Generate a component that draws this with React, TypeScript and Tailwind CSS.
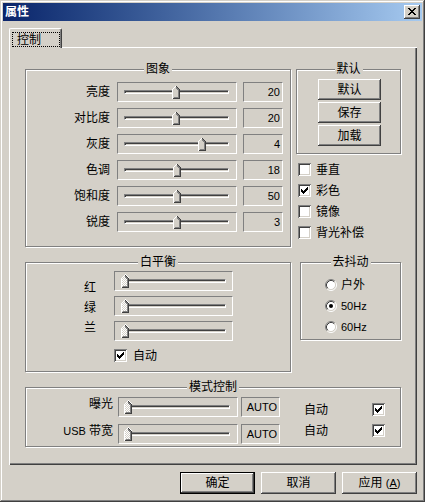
import React from "react";

const FONT = "font-['Liberation_Sans','Noto_Sans_CJK_SC',sans-serif]";

function Thumb({ left, dither }: { left: number; dither?: boolean }) {
  return (
    <svg
      className="absolute top-[2px]"
      style={{ left }}
      width="8"
      height="14"
      viewBox="0 0 8 14"
      shapeRendering="crispEdges"
    >
      <path d="M0 4 L4 0 L8 4 L8 14 L0 14 Z" fill={dither ? "url(#dith)" : "#d4d0c8"} />
      <path d="M0.5 13.5 V4.5 L4 1" stroke="#ffffff" fill="none" />
      <path d="M4 1 L7.5 4.5 V13.5 H0.5" stroke="#404040" fill="none" />
      <path d="M4 2.4 L6.5 4.9 V12.5 H1.5" stroke="#808080" fill="none" />
    </svg>
  );
}

function Slider({ w, thumb, dither }: { w: string; thumb: number; dither?: boolean }) {
  return (
    <div
      className={`relative h-[20px] shrink-0 border border-t-[#808080] border-l-[#808080] border-b-white border-r-white ${w}`}
    >
      <div className="ml-[6px] mt-[7px] w-[105px] h-[4px] bg-[#d4d0c8] border border-t-[#808080] border-l-[#808080] border-b-white border-r-white shadow-[inset_1px_1px_#404040]" />
      <Thumb left={thumb} dither={dither} />
    </div>
  );
}

function ValueBox({ w, children }: { w: string; children: React.ReactNode }) {
  return (
    <div
      className={`h-[20px] shrink-0 border border-t-[#808080] border-l-[#808080] border-b-white border-r-white flex items-center justify-end pr-[2px] pb-[1px] text-[11px] ${w}`}
    >
      {children}
    </div>
  );
}

const CHECK_COLS = [2, 3, 4, 3, 2, 1, 0];

function CheckBox({ checked }: { checked?: boolean }) {
  return (
    <div className="relative w-[13px] h-[13px] shrink-0 bg-white shadow-[inset_1px_1px_#808080,inset_-1px_-1px_#ffffff,inset_2px_2px_#404040,inset_-2px_-2px_#d4d0c8]">
      {checked && (
        <svg className="absolute left-[3px] top-[3px]" width="7" height="7" shapeRendering="crispEdges">
          {CHECK_COLS.map((y, x) => (
            <rect key={x} x={x} y={y} width="1" height="3" fill="#000" />
          ))}
        </svg>
      )}
    </div>
  );
}

function Radio({ checked }: { checked?: boolean }) {
  return (
    <svg width="12" height="12" viewBox="0 0 12 12" className="shrink-0">
      <circle cx="6" cy="6" r="4.6" fill="#fff" />
      <path d="M2.11 9.89 A5.5 5.5 0 0 1 9.89 2.11" stroke="#808080" fill="none" />
      <path d="M9.89 2.11 A5.5 5.5 0 0 1 2.11 9.89" stroke="#ffffff" fill="none" />
      <path d="M2.82 9.18 A4.5 4.5 0 0 1 9.18 2.82" stroke="#404040" fill="none" />
      <path d="M9.18 2.82 A4.5 4.5 0 0 1 2.82 9.18" stroke="#d4d0c8" fill="none" />
      {checked && <circle cx="6" cy="6" r="2" fill="#000" />}
    </svg>
  );
}

function Btn({
  className,
  def,
  children,
}: {
  className: string;
  def?: boolean;
  children: React.ReactNode;
}) {
  return (
    <div className={`shrink-0 bg-[#d4d0c8] ${def ? "border border-black" : ""} ${className}`}>
      <div className="w-full h-full flex items-center justify-center shadow-[inset_-1px_-1px_#404040,inset_1px_1px_#ffffff,inset_-2px_-2px_#808080,inset_2px_2px_#d4d0c8]">
        {children}
      </div>
    </div>
  );
}

function Group({
  title,
  className,
  children,
}: {
  title: string;
  className: string;
  children?: React.ReactNode;
}) {
  return (
    <div
      className={`relative shrink-0 border border-[#808080] shadow-[inset_1px_1px_#ffffff,1px_1px_#ffffff] ${className}`}
    >
      <span className="absolute left-1/2 -translate-x-1/2 -top-[8px] px-[2px] bg-[#d4d0c8] whitespace-nowrap leading-[14px]">
        {title}
      </span>
      {children}
    </div>
  );
}

const X_ROWS: number[][] = [
  [0, 1, 6, 7],
  [1, 2, 5, 6],
  [2, 3, 4, 5],
  [3, 4],
  [2, 3, 4, 5],
  [1, 2, 5, 6],
  [0, 1, 6, 7],
];

const IMAGE_ROWS = [
  { l: "亮度", v: "20", t: 54 },
  { l: "对比度", v: "20", t: 54 },
  { l: "灰度", v: "4", t: 80 },
  { l: "色调", v: "18", t: 55 },
  { l: "饱和度", v: "50", t: 55 },
  { l: "锐度", v: "3", t: 55 },
];

export default function App() {
  return (
    <div
      className={`${FONT} text-[12px] leading-[14px] text-black w-[425px] h-[502px] bg-[#d4d0c8] p-[3px] flex flex-col shadow-[inset_-1px_-1px_#404040,inset_1px_1px_#d4d0c8,inset_-2px_-2px_#808080,inset_2px_2px_#ffffff]`}
    >
      <svg width="0" height="0" className="absolute">
        <defs>
          <pattern id="dith" width="2" height="2" patternUnits="userSpaceOnUse">
            <rect width="2" height="2" fill="#d4d0c8" />
            <rect width="1" height="1" fill="#ffffff" />
            <rect x="1" y="1" width="1" height="1" fill="#ffffff" />
          </pattern>
        </defs>
      </svg>

      {/* Title bar */}
      <div className="h-[18px] shrink-0 flex items-center bg-linear-to-r from-[#0a246a] to-[#a6caf0] px-[2px]">
        <span className="text-white font-bold text-[12px] leading-[14px]">属性</span>
        <div className="ml-auto w-[16px] h-[14px] bg-[#d4d0c8] relative shadow-[inset_-1px_-1px_#404040,inset_1px_1px_#ffffff,inset_-2px_-2px_#808080,inset_2px_2px_#d4d0c8]">
          <svg className="absolute left-[4px] top-[3px]" width="8" height="7" shapeRendering="crispEdges">
            {X_ROWS.map((cols, y) =>
              cols.map((x) => <rect key={`${x}-${y}`} x={x} y={y} width="1" height="1" fill="#000" />)
            )}
          </svg>
        </div>
      </div>

      {/* Tab + panel */}
      <div className="flex flex-col pl-[6px] pt-[7px]">
        <div className="relative z-10 -mb-[1px] w-[53px] h-[20px] bg-[#d4d0c8] border-l border-t border-white border-r border-r-[#404040] rounded-t-[2px] shadow-[inset_-1px_0_#808080]">
          <div className="mt-[3px] ml-[2px] w-[48px] h-[15px] border border-dotted border-black flex items-center pl-[4px]">
            控制
          </div>
        </div>

        <div className="w-[408px] h-[418px] shadow-[inset_1px_1px_#ffffff,inset_-1px_-1px_#404040,inset_-2px_-2px_#808080] pl-[16px] pt-[22px] flex flex-col">
          {/* Row 1 */}
          <div className="flex items-start gap-[5px]">
            <Group title="图象" className="w-[266px] h-[178px] pt-[12px] flex flex-col gap-[6px]">
              {IMAGE_ROWS.map((r) => (
                <div key={r.l} className="flex items-center">
                  <div className="w-[84px] text-right">{r.l}</div>
                  <div className="ml-[7px]">
                    <Slider w="w-[120px]" thumb={r.t} />
                  </div>
                  <div className="ml-[6px]">
                    <ValueBox w="w-[40px]">{r.v}</ValueBox>
                  </div>
                </div>
              ))}
            </Group>

            <div className="w-[105px] flex flex-col">
              <Group title="默认" className="h-[85px] pt-[9px] pl-[21px] flex flex-col gap-[2px]">
                <Btn className="w-[63px] h-[21px]">默认</Btn>
                <Btn className="w-[63px] h-[21px]">保存</Btn>
                <Btn className="w-[63px] h-[21px]">加载</Btn>
              </Group>
              <div className="mt-[9px] pl-[2px] flex flex-col gap-[8px]">
                {[
                  { l: "垂直", c: false },
                  { l: "彩色", c: true },
                  { l: "镜像", c: false },
                  { l: "背光补偿", c: false },
                ].map((c) => (
                  <div key={c.l} className="h-[13px] flex items-center gap-[5px]">
                    <CheckBox checked={c.c} />
                    <span>{c.l}</span>
                  </div>
                ))}
              </div>
            </div>
          </div>

          {/* Row 2 */}
          <div className="mt-[15px] flex items-start gap-[9px]">
            <Group title="白平衡" className="w-[266px] h-[110px] flex flex-col">
              <div className="flex items-start">
                <div className="ml-[58px] mt-[18px] w-[12px] flex flex-col gap-[6px]">
                  <span>红</span>
                  <span>绿</span>
                  <span>兰</span>
                </div>
                <div className="ml-[18px] mt-[8px] flex flex-col gap-[5px]">
                  <Slider w="w-[119px]" thumb={6} dither />
                  <Slider w="w-[119px]" thumb={6} dither />
                  <Slider w="w-[119px]" thumb={6} dither />
                </div>
              </div>
              <div className="ml-[88px] mt-[8px] h-[13px] flex items-center gap-[6px]">
                <CheckBox checked />
                <span>自动</span>
              </div>
            </Group>

            <Group title="去抖动" className="w-[101px] h-[78px] pt-[16px] pl-[24px] flex flex-col gap-[9px]">
              <div className="h-[12px] flex items-center gap-[4px]">
                <Radio />
                <span>户外</span>
              </div>
              <div className="h-[12px] flex items-center gap-[4px]">
                <Radio checked />
                <span className="text-[11px]">50Hz</span>
              </div>
              <div className="h-[12px] flex items-center gap-[4px]">
                <Radio />
                <span className="text-[11px]">60Hz</span>
              </div>
            </Group>
          </div>

          {/* Row 3 */}
          <div className="mt-[15px]">
            <Group title="模式控制" className="w-[376px] h-[60px] flex items-start">
              <div className="pt-[9px] flex flex-col gap-[7px]">
                <div className="flex items-start">
                  <div className="w-[87px] text-right">曝光</div>
                  <div className="ml-[5px]">
                    <Slider w="w-[120px]" thumb={5} dither />
                  </div>
                  <div className="ml-[3px]">
                    <ValueBox w="w-[39px]">AUTO</ValueBox>
                  </div>
                </div>
                <div className="flex items-start">
                  <div className="w-[87px] text-right">
                    <span className="text-[11px]">USB </span>带宽
                  </div>
                  <div className="ml-[5px]">
                    <Slider w="w-[120px]" thumb={5} dither />
                  </div>
                  <div className="ml-[3px]">
                    <ValueBox w="w-[39px]">AUTO</ValueBox>
                  </div>
                </div>
              </div>
              <div className="ml-[24px] pt-[15px] w-[81px] flex flex-col gap-[8px]">
                <div className="h-[13px] flex items-center justify-between">
                  <span>自动</span>
                  <CheckBox checked />
                </div>
                <div className="h-[13px] flex items-center justify-between">
                  <span>自动</span>
                  <CheckBox checked />
                </div>
              </div>
            </Group>
          </div>
        </div>
      </div>

      {/* Bottom buttons */}
      <div className="mt-[7px] flex justify-end gap-[6px] pr-[5px]">
        <Btn def className="w-[75px] h-[22px]">
          确定
        </Btn>
        <Btn className="w-[75px] h-[22px]">取消</Btn>
        <Btn className="w-[75px] h-[22px]">
          <span>
            应用 <span className="text-[11px]">(</span>
            <span className="text-[11px] underline">A</span>
            <span className="text-[11px]">)</span>
          </span>
        </Btn>
      </div>
    </div>
  );
}
